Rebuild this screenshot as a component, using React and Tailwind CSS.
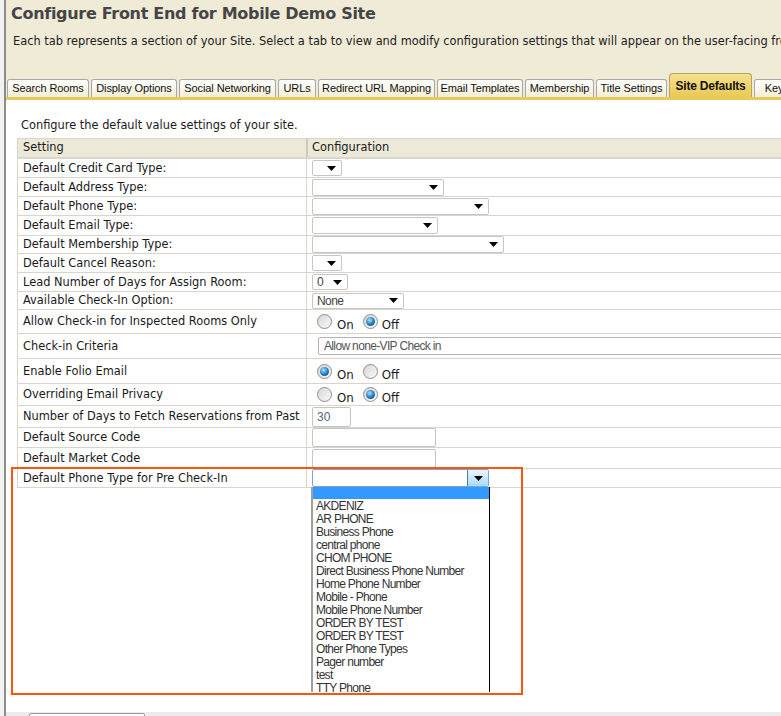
import React from 'react';

const tabs = [
  ['Search Rooms', 'w-[82px]'],
  ['Display Options', 'w-[86px]'],
  ['Social Networking', 'w-[97px]'],
  ['URLs', 'w-[38px]'],
  ['Redirect URL Mapping', 'w-[117px]'],
  ['Email Templates', 'w-[86px]'],
  ['Membership', 'w-[69px]'],
  ['Title Settings', 'w-[71px]'],
  ['Site Defaults', 'w-[83px]', true],
  ['Key', 'w-[40px]'],
];

const phoneTypes = [
  'AKDENIZ', 'AR PHONE', 'Business Phone', 'central phone', 'CHOM PHONE',
  'Direct Business Phone Number', 'Home Phone Number', 'Mobile - Phone',
  'Mobile Phone Number', 'ORDER BY TEST', 'ORDER BY TEST', 'Other Phone Types',
  'Pager number', 'test', 'TTY Phone',
];

const ie = { fontFamily: '"Liberation Sans", Arial, sans-serif' };

function Arrow() {
  return (
    <svg width="9" height="5" viewBox="0 0 9 5" className="shrink-0">
      <path d="M0 0H9L4.5 5Z" fill="#000" />
    </svg>
  );
}

function Select({ w, h = 'h-[16px]', text }) {
  return (
    <div className={`flex items-center justify-between rounded-[2px] border border-[#c6c6c6] bg-white pl-[4px] pr-[5px] text-[12px] tracking-[-0.6px] text-[#444] ${w} ${h}`} style={ie}>
      <span>{text}</span>
      <Arrow />
    </div>
  );
}

function Radio({ checked }) {
  return (
    <span className="flex h-[15px] w-[15px] items-center justify-center rounded-full border border-[#8d8d8d] bg-gradient-to-br from-[#d6d6d6] to-[#fbfbfb]">
      {checked && <span className="h-[9px] w-[9px] rounded-full bg-[radial-gradient(circle_at_40%_35%,#a8e4ff,#1d78bd_55%,#0a3a66)]" />}
    </span>
  );
}

function OnOff({ on }) {
  return (
    <div className="flex items-end pl-[5px] text-[11.8px]">
      <Radio checked={on} />
      <span className="ml-[5px] translate-y-[2px] leading-[12px]">On</span>
      <span className="ml-[9px]"><Radio checked={!on} /></span>
      <span className="ml-[4px] translate-y-[2px] leading-[12px]">Off</span>
    </div>
  );
}

function Input({ w, h, text }) {
  return (
    <div className={`flex items-center rounded-[2px] border border-[#c4c4c4] bg-white pl-[4px] text-[12px] text-[#52677c] ${w} ${h}`} style={ie}>
      {text}
    </div>
  );
}

function Row({ label, h, children }) {
  return (
    <div className={`flex border-b border-[#dad5cb] ${h}`}>
      <div className="flex w-[288px] shrink-0 items-center pl-[5px] pt-[1px] whitespace-nowrap">{label}</div>
      <div className="flex flex-1 items-center border-l border-[#dad5cb] pl-[5px]">{children}</div>
    </div>
  );
}

export default function App() {
  return (
    <div className="relative h-[716px] w-[781px] overflow-hidden bg-white text-[11.4px] text-[#1a1a1a]" style={{ fontFamily: '"DejaVu Sans", Verdana, sans-serif' }}>
      <div className="flex h-full">
        <div className="w-[4px] shrink-0 bg-[#f2f2f2]" />
        <div className="w-[2px] shrink-0 bg-[#8c8c8c]" />
        <div className="flex min-w-0 flex-1 flex-col">
          <div className="bg-[#efebd7]">
            <h1 className="whitespace-nowrap pl-[5px] pt-[3px] text-[16px] font-bold leading-[22px] tracking-[-0.3px] text-[#454545]">Configure Front End for Mobile Demo Site</h1>
            <p className="mt-[9px] whitespace-nowrap pl-[7px] leading-[14px] text-[#222]">Each tab represents a section of your Site. Select a tab to view and modify configuration settings that will appear on the user-facing front end of your site.</p>
            <div className="mt-[25px] flex h-[24px] items-end gap-[2px] pl-[1px] whitespace-nowrap" style={ie}>
              {tabs.map(([t, w, active]) =>
                active ? (
                  <div key={t} className={`flex h-[24px] shrink-0 items-center justify-center rounded-t-[4px] border border-b-0 border-[#b5a36a] bg-gradient-to-b from-[#f6e08a] to-[#e9c955] text-[12px] font-bold tracking-[-0.2px] text-[#111] ${w}`}>{t}</div>
                ) : (
                  <div key={t} className={`flex h-[18px] shrink-0 items-center justify-center rounded-t-[3px] border border-b-0 border-[#a8a8a8] bg-gradient-to-b from-[#ffffff] to-[#f3eed3] text-[11px] tracking-[-0.1px] text-[#111] ${w}`}>{t}</div>
                )
              )}
            </div>
            <div className="h-[3px] bg-[#e8ca58]" />
          </div>

          <div className="flex-1 pl-[11px]">
            <p className="ml-[4px] mt-[18px] leading-[14px]">Configure the default value settings of your site.</p>
            <div className="mt-[6px] w-[820px] border-l border-t border-[#dad5cb]">
              <div className="flex h-[20px] border-b-2 border-[#dcd7cc] bg-[#ece9d8]">
                <div className="flex w-[288px] shrink-0 items-center pl-[5px]">Setting</div>
                <div className="flex flex-1 items-center border-l-2 border-[#cfc9bc] pl-[4px]">Configuration</div>
              </div>
              <Row label="Default Credit Card Type:" h="h-[19px]"><Select w="w-[30px]" /></Row>
              <Row label="Default Address Type:" h="h-[19px]"><Select w="w-[132px]" h="h-[17px]" /></Row>
              <Row label="Default Phone Type:" h="h-[19px]"><Select w="w-[177px]" h="h-[17px]" /></Row>
              <Row label="Default Email Type:" h="h-[20px]"><Select w="w-[126px]" h="h-[17px]" /></Row>
              <Row label="Default Membership Type:" h="h-[18px]"><Select w="w-[192px]" h="h-[17px]" /></Row>
              <Row label="Default Cancel Reason:" h="h-[19px]"><Select w="w-[30px]" /></Row>
              <Row label="Lead Number of Days for Assign Room:" h="h-[19px]"><Select w="w-[36px]" text="0" /></Row>
              <Row label="Available Check-In Option:" h="h-[18px]"><Select w="w-[92px]" text="None" /></Row>
              <Row label="Allow Check-in for Inspected Rooms Only" h="h-[24px]"><OnOff on={false} /></Row>
              <Row label="Check-in Criteria" h="h-[25px]">
                <div className="ml-[6px] flex h-[18px] flex-1 items-center rounded-[2px] border border-[#b4b4b4] pl-[5px] text-[12px] tracking-[-0.65px] text-[#555]" style={ie}>Allow none-VIP Check in</div>
              </Row>
              <Row label="Enable Folio Email" h="h-[25px]"><OnOff on /></Row>
              <Row label="Overriding Email Privacy" h="h-[22px]"><OnOff on={false} /></Row>
              <Row label="Number of Days to Fetch Reservations from Past" h="h-[22px]"><Input w="w-[39px]" h="h-[20px]" text="30" /></Row>
              <Row label="Default Source Code" h="h-[20px]"><Input w="w-[124px]" h="h-[19px]" /></Row>
              <Row label="Default Market Code" h="h-[21px]"><Input w="w-[124px]" h="h-[19px]" /></Row>
              <Row label="Default Phone Type for Pre Check-In" h="h-[19px]">
                <div className="flex h-[18px] w-[177px] items-stretch rounded-[2px] border border-[#7ea6d2] bg-white">
                  <div className="flex-1" />
                  <div className="flex w-[21px] items-center justify-center rounded-r-[2px] border-l border-[#3c7fb1] bg-gradient-to-b from-[#eaf6fd] to-[#a8daf6]"><Arrow /></div>
                </div>
              </Row>
            </div>
          </div>

          <div className="relative h-[4px] bg-[#ececec]">
            <div className="absolute left-[23px] top-[1px] h-[6px] w-[116px] rounded-t-[2px] border border-[#9a9a9a] bg-white" />
          </div>
        </div>
      </div>

      <div className="absolute left-[311px] top-[487px] h-[205px] w-[179px] overflow-hidden border-l-2 border-r border-l-[#a0a0a0] border-r-black bg-white text-[12px] tracking-[-0.7px] text-[#333]" style={ie}>
        <div className="h-[12px] bg-[#3399ff]" />
        {phoneTypes.map((p, i) => (
          <div key={i} className="flex h-[13px] items-center whitespace-nowrap pl-[3px]">{p}</div>
        ))}
      </div>

      <div className="pointer-events-none absolute left-[11px] top-[467px] h-[228px] w-[512px] border-2 border-[#fa5410]" />
    </div>
  );
}
